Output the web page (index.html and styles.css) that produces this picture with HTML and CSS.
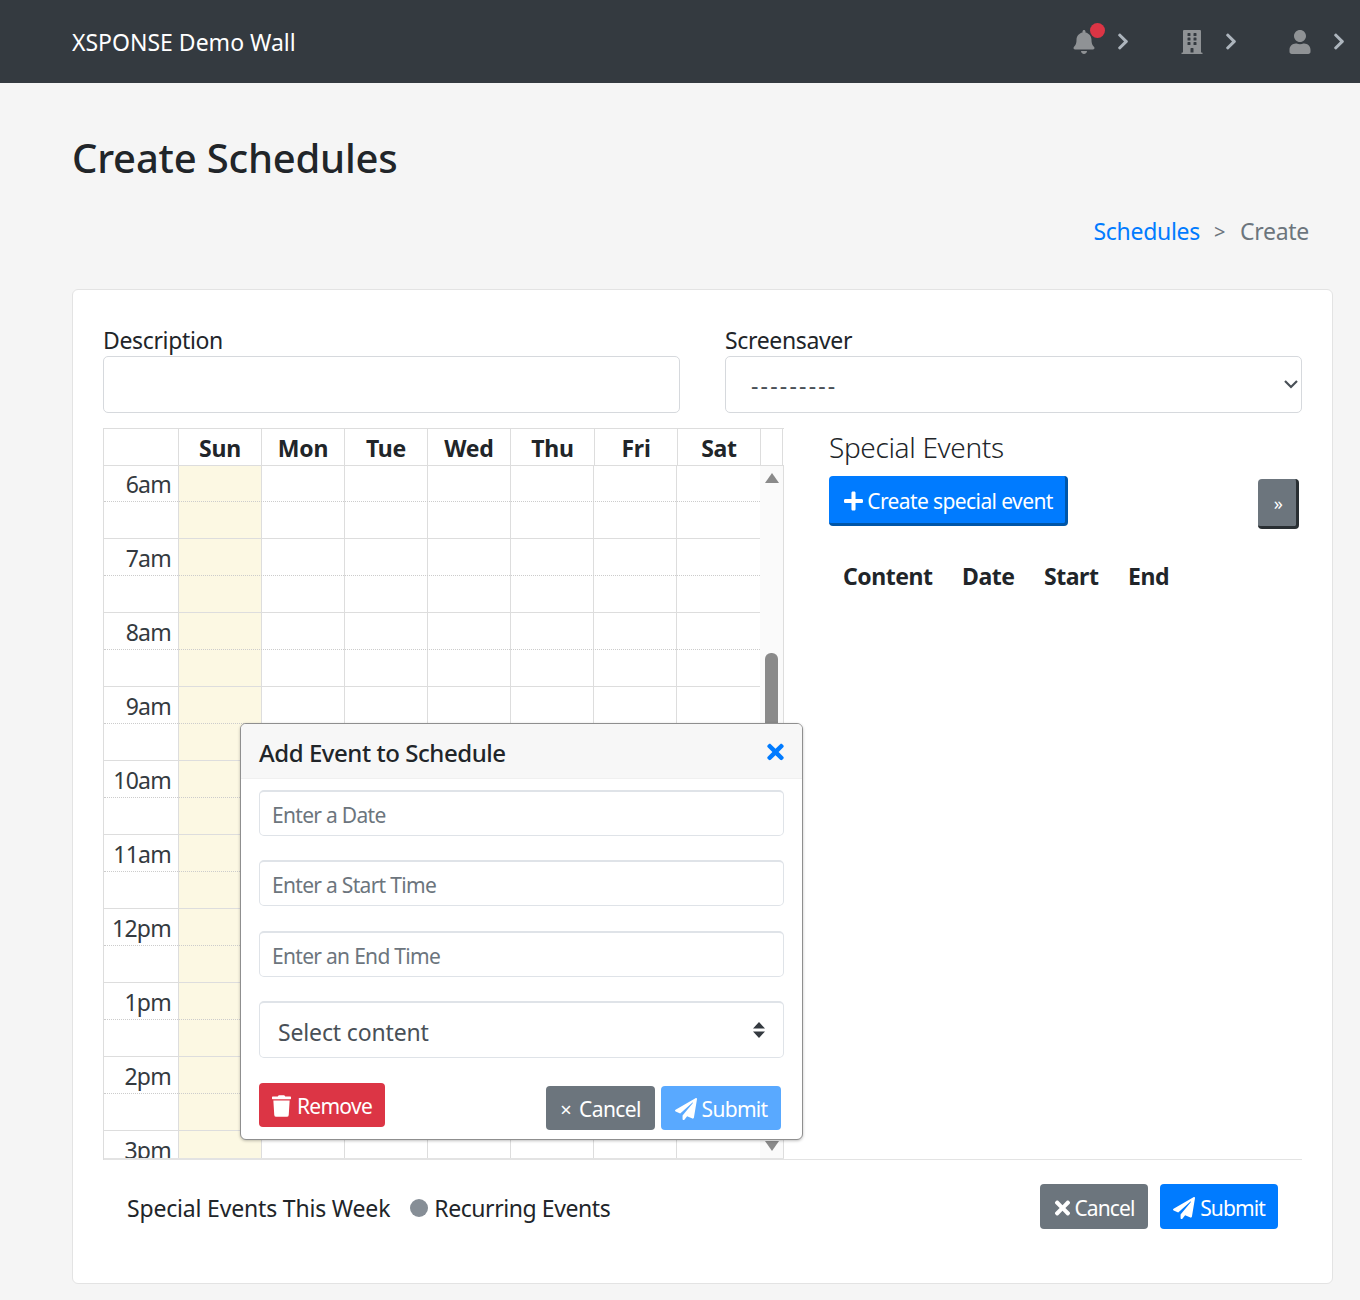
FILE: index.html
```html
<!DOCTYPE html>
<html lang="en">
<head>
<meta charset="utf-8">
<title>Create Schedules</title>
<link rel="stylesheet" href="styles.css">
</head>
<body>
<svg class="defs" width="0" height="0" aria-hidden="true">
  <symbol id="i-bell" viewBox="0 0 448 512"><path d="M224 512c35.32 0 63.97-28.65 63.97-64H160.03c0 35.35 28.65 64 63.97 64zm215.39-149.71c-19.32-20.76-55.47-51.99-55.47-154.29 0-77.7-54.48-139.9-127.94-155.16V32c0-17.67-14.32-32-31.98-32s-31.98 14.33-31.98 32v20.84C118.56 68.1 64.08 130.3 64.08 208c0 102.3-36.15 133.53-55.47 154.29-6 6.45-8.66 14.16-8.61 21.71.11 16.4 12.98 32 32.1 32h383.8c19.12 0 32-15.6 32.1-32 .05-7.55-2.61-15.27-8.61-21.71z"/></symbol>
  <symbol id="i-building" viewBox="0 0 448 512"><path d="M436 480h-20V24c0-13.255-10.745-24-24-24H56C42.745 0 32 10.745 32 24v456H12c-6.627 0-12 5.373-12 12v20h448v-20c0-6.627-5.373-12-12-12zM128 76c0-6.627 5.373-12 12-12h40c6.627 0 12 5.373 12 12v40c0 6.627-5.373 12-12 12h-40c-6.627 0-12-5.373-12-12V76zm0 96c0-6.627 5.373-12 12-12h40c6.627 0 12 5.373 12 12v40c0 6.627-5.373 12-12 12h-40c-6.627 0-12-5.373-12-12v-40zm52 148h-40c-6.627 0-12-5.373-12-12v-40c0-6.627 5.373-12 12-12h40c6.627 0 12 5.373 12 12v40c0 6.627-5.373 12-12 12zm76 160h-64v-84c0-6.627 5.373-12 12-12h40c6.627 0 12 5.373 12 12v84zm64-172c0 6.627-5.373 12-12 12h-40c-6.627 0-12-5.373-12-12v-40c0-6.627 5.373-12 12-12h40c6.627 0 12 5.373 12 12v40zm0-96c0 6.627-5.373 12-12 12h-40c-6.627 0-12-5.373-12-12v-40c0-6.627 5.373-12 12-12h40c6.627 0 12 5.373 12 12v40zm0-96c0 6.627-5.373 12-12 12h-40c-6.627 0-12-5.373-12-12V76c0-6.627 5.373-12 12-12h40c6.627 0 12 5.373 12 12v40z"/></symbol>
  <symbol id="i-user" viewBox="0 0 448 512"><path d="M224 256c70.7 0 128-57.3 128-128S294.7 0 224 0 96 57.3 96 128s57.3 128 128 128zm89.6 32h-16.7c-22.2 10.2-46.9 16-72.9 16s-50.6-5.8-72.9-16h-16.7C60.2 288 0 348.2 0 422.4V464c0 26.5 21.5 48 48 48h352c26.5 0 48-21.5 48-48v-41.6c0-74.2-60.2-134.4-134.4-134.4z"/></symbol>
  <symbol id="i-chevron" viewBox="0 0 320 512"><path d="M285.476 272.971L91.132 467.314c-9.373 9.373-24.569 9.373-33.941 0l-22.667-22.667c-9.357-9.357-9.375-24.522-.04-33.901L188.505 256 34.484 101.255c-9.335-9.379-9.317-24.544.04-33.901l22.667-22.667c9.373-9.373 24.569-9.373 33.941 0L285.475 239.03c9.373 9.372 9.373 24.568.001 33.941z"/></symbol>
  <symbol id="i-times" viewBox="0 0 352 512"><path d="M242.72 256l100.07-100.07c12.28-12.28 12.28-32.19 0-44.48l-22.24-22.24c-12.28-12.28-32.19-12.28-44.48 0L176 189.28 75.93 89.21c-12.28-12.28-32.19-12.28-44.48 0L9.21 111.45c-12.28 12.28-12.28 32.19 0 44.48L109.28 256 9.21 356.07c-12.28 12.28-12.28 32.19 0 44.48l22.24 22.24c12.28 12.28 32.2 12.28 44.48 0L176 322.72l100.07 100.07c12.28 12.28 32.2 12.28 44.48 0l22.24-22.24c12.28-12.28 12.28-32.19 0-44.48L242.72 256z"/></symbol>
  <symbol id="i-plane" viewBox="0 0 512 512"><path d="M476 3.2L12.5 270.6c-18.1 10.4-15.8 35.6 2.2 43.2L121 358.4l287.3-253.2c5.5-4.9 13.3 2.6 8.6 8.3L176 407v80.5c0 23.6 28.5 32.9 42.5 15.8L282 426l124.6 52.2c14.2 6 30.4-2.9 33-18.2l72-432C515 7.8 493.3-6.8 476 3.2z"/></symbol>
  <symbol id="i-trash" viewBox="0 0 448 512"><path d="M432 32H312l-9.4-18.7A24 24 0 0 0 281.1 0H166.8a23.72 23.72 0 0 0-21.4 13.3L136 32H16A16 16 0 0 0 0 48v32a16 16 0 0 0 16 16h416a16 16 0 0 0 16-16V48a16 16 0 0 0-16-16zM53.2 467a48 48 0 0 0 47.9 45h245.8a48 48 0 0 0 47.9-45L416 128H32z"/></symbol>
  <symbol id="i-plus" viewBox="0 0 448 512"><path d="M416 208H272V64c0-17.67-14.33-32-32-32h-32c-17.67 0-32 14.33-32 32v144H32c-17.67 0-32 14.33-32 32v32c0 17.67 14.33 32 32 32h144v144c0 17.67 14.33 32 32 32h32c17.67 0 32-14.33 32-32V304h144c17.67 0 32-14.33 32-32v-32c0-17.67-14.33-32-32-32z"/></symbol>
</svg>

<nav class="navbar">
  <a class="brand">XSPONSE Demo Wall</a>
  <div class="nav-items">
    <div class="nav-item">
      <svg class="nav-icon"><use href="#i-bell"/></svg>
      <span class="badge"></span>
      <svg class="nav-chevron"><use href="#i-chevron"/></svg>
    </div>
    <div class="nav-item">
      <svg class="nav-icon"><use href="#i-building"/></svg>
      <svg class="nav-chevron"><use href="#i-chevron"/></svg>
    </div>
    <div class="nav-item">
      <svg class="nav-icon"><use href="#i-user"/></svg>
      <svg class="nav-chevron"><use href="#i-chevron"/></svg>
    </div>
  </div>
</nav>

<main class="page">
  <h1 class="title">Create Schedules</h1>
  <div class="crumbs"><a class="crumb-link">Schedules</a><span class="crumb-sep">&gt;</span><span class="crumb-now">Create</span></div>

  <section class="card">
    <div class="fields">
      <div class="field">
        <label class="field-label">Description</label>
        <input class="field-input" type="text">
      </div>
      <div class="field">
        <label class="field-label">Screensaver</label>
        <select class="field-input field-select"><option>---------</option></select>
      </div>
    </div>

    <div class="workspace">
      <div class="calendar">
        <div class="cal-head">
          <div class="head-cell head-axis"></div>
          <div class="head-cell">Sun</div>
          <div class="head-cell">Mon</div>
          <div class="head-cell">Tue</div>
          <div class="head-cell">Wed</div>
          <div class="head-cell head-wide">Thu</div>
          <div class="head-cell">Fri</div>
          <div class="head-cell">Sat</div>
          <div class="head-cell head-gutter"></div>
        </div>
        <div class="cal-body">
          <div class="rows">
            <div class="hour"><div class="axis">6am</div><div class="day today"></div><div class="day"></div><div class="day"></div><div class="day"></div><div class="day"></div><div class="day"></div><div class="day"></div></div>
            <div class="hour"><div class="axis">7am</div><div class="day today"></div><div class="day"></div><div class="day"></div><div class="day"></div><div class="day"></div><div class="day"></div><div class="day"></div></div>
            <div class="hour"><div class="axis">8am</div><div class="day today"></div><div class="day"></div><div class="day"></div><div class="day"></div><div class="day"></div><div class="day"></div><div class="day"></div></div>
            <div class="hour"><div class="axis">9am</div><div class="day today"></div><div class="day"></div><div class="day"></div><div class="day"></div><div class="day"></div><div class="day"></div><div class="day"></div></div>
            <div class="hour"><div class="axis">10am</div><div class="day today"></div><div class="day"></div><div class="day"></div><div class="day"></div><div class="day"></div><div class="day"></div><div class="day"></div></div>
            <div class="hour"><div class="axis">11am</div><div class="day today"></div><div class="day"></div><div class="day"></div><div class="day"></div><div class="day"></div><div class="day"></div><div class="day"></div></div>
            <div class="hour"><div class="axis">12pm</div><div class="day today"></div><div class="day"></div><div class="day"></div><div class="day"></div><div class="day"></div><div class="day"></div><div class="day"></div></div>
            <div class="hour"><div class="axis">1pm</div><div class="day today"></div><div class="day"></div><div class="day"></div><div class="day"></div><div class="day"></div><div class="day"></div><div class="day"></div></div>
            <div class="hour"><div class="axis">2pm</div><div class="day today"></div><div class="day"></div><div class="day"></div><div class="day"></div><div class="day"></div><div class="day"></div><div class="day"></div></div>
            <div class="hour"><div class="axis">3pm</div><div class="day today"></div><div class="day"></div><div class="day"></div><div class="day"></div><div class="day"></div><div class="day"></div><div class="day"></div></div>
          </div>
          <div class="scrollbar">
            <span class="arrow-up"></span>
            <span class="thumb"></span>
            <span class="arrow-down"></span>
          </div>
        </div>
      </div>

      <aside class="events">
        <h2 class="events-title">Special Events</h2>
        <div class="events-actions">
          <button class="btn btn-create"><svg class="ico ico-plus"><use href="#i-plus"/></svg>Create special event</button>
          <button class="btn btn-toggle">»</button>
        </div>
        <div class="events-cols">
          <span class="col-content">Content</span>
          <span class="col-date">Date</span>
          <span class="col-start">Start</span>
          <span class="col-end">End</span>
        </div>
      </aside>
    </div>

    <div class="footer">
      <div class="legend">
        <span class="legend-special">Special Events This Week</span>
        <span class="legend-dot"></span>
        <span class="legend-rec">Recurring Events</span>
      </div>
      <div class="footer-actions">
        <button class="btn btn-gray btn-foot"><svg class="ico ico-x"><use href="#i-times"/></svg>Cancel</button>
        <button class="btn btn-blue btn-foot"><svg class="ico ico-send"><use href="#i-plane"/></svg>Submit</button>
      </div>
    </div>

    <div class="modal">
      <div class="modal-head">
        <h3 class="modal-title">Add Event to Schedule</h3>
        <svg class="modal-close"><use href="#i-times"/></svg>
      </div>
      <div class="modal-body">
        <input class="m-input" type="text" placeholder="Enter a Date">
        <input class="m-input m-second" type="text" placeholder="Enter a Start Time">
        <input class="m-input" type="text" placeholder="Enter an End Time">
        <select class="m-select"><option>Select content</option></select>
        <div class="m-actions">
          <button class="btn btn-red"><svg class="ico ico-trash"><use href="#i-trash"/></svg>Remove</button>
          <div class="m-right">
            <button class="btn btn-gray btn-m"><span class="small-x">×</span>Cancel</button>
            <button class="btn btn-faded btn-m"><svg class="ico ico-send"><use href="#i-plane"/></svg>Submit</button>
          </div>
        </div>
      </div>
    </div>
  </section>
</main>
</body>
</html>
```

FILE: styles.css
```css
* { box-sizing: border-box; }
html, body { margin: 0; padding: 0; }
body {
  background: #f5f5f5;
  color: #212529;
  font-family: "Noto Sans", "Open Sans", sans-serif;
  font-size: 23px;
  height: 1300px;
  overflow: hidden;
}
.defs { position: absolute; }

/* navbar */
.navbar {
  height: 83px;
  background: #343a40;
  display: flex;
  align-items: center;
  justify-content: space-between;
  padding: 0 15px 0 72px;
}
.brand { color: #fff; font-size: 23px; }
.nav-items { display: flex; gap: 52px; }
.nav-item { position: relative; display: flex; align-items: center; gap: 22px; }
.nav-icon { width: 22px; height: 24px; margin-top: 1px; fill: #8f9295; display: block; }
.nav-chevron { width: 12px; height: 19px; fill: #adb5bd; display: block; }
.badge {
  position: absolute;
  left: 17px;
  top: -6px;
  width: 15px;
  height: 15px;
  border-radius: 50%;
  background: #dc3545;
}

/* page header */
.page { padding: 0 27px 0 72px; }
.title {
  margin: 0;
  padding-top: 47px;
  font-size: 40px;
  line-height: 56px;
  font-weight: 500;
  letter-spacing: -0.2px;
}
.crumbs {
  display: flex;
  justify-content: flex-end;
  align-items: center;
  gap: 14px;
  height: 32px;
  margin-top: 29px;
  padding-right: 24px;
  font-size: 23px;
  letter-spacing: -0.3px;
}
.crumb-link { color: #007bff; }
.crumb-sep { color: #6c757d; font-size: 20px; margin-right: 1px; }
.crumb-now { color: #6c757d; }

/* card */
.card {
  position: relative;
  margin-top: 42px;
  height: 995px;
  background: #fff;
  border: 1px solid #e3e3e3;
  border-radius: 6px;
  padding: 35px 30px 0;
}
.fields { display: grid; grid-template-columns: 577px 577px; column-gap: 45px; }
.field-label { display: block; height: 31px; line-height: 30px; font-size: 23px; letter-spacing: -0.35px; color: #212529; }
.field-input {
  display: block;
  width: 100%;
  height: 57px;
  border: 1px solid #d6d9dd;
  border-radius: 5px;
  background: #fff;
  font: inherit;
  color: #495057;
}
.field-select {
  appearance: none;
  padding-left: 25px;
  letter-spacing: 2.2px;
  background: #fff url("data:image/svg+xml,%3Csvg xmlns='http://www.w3.org/2000/svg' width='14' height='9'%3E%3Cpath fill='none' stroke='%23495057' stroke-width='2.200' d='M1 1l6 6 6-6'/%3E%3C/svg%3E") no-repeat right 3px top 23px;
}

/* workspace */
.workspace { display: flex; margin-top: 15px; }
.calendar { width: 681px; height: 732px; border-left: 1px solid #ddd; flex: none; }
.cal-head {
  display: flex;
  height: 38px;
  border-top: 1px solid #ddd;
  border-bottom: 1px solid #ddd;
}
.head-cell {
  width: 83px;
  border-right: 1px solid #ddd;
  text-align: center;
  font-weight: 700;
  font-size: 23px;
  line-height: 38px;
  letter-spacing: -0.25px;
}
.head-axis { width: 75px; }
.head-wide { width: 84px; }
.head-gutter { width: 22px; border-right: 1px solid #ddd; }
.cal-body {
  display: flex;
  height: 693px;
  overflow: hidden;
  border-bottom: 1px solid #e3e3e3;
}
.rows { width: 656px; flex: none; }
.hour {
  position: relative;
  display: grid;
  grid-template-columns: 74px repeat(7, 83px);
  height: 74px;
  border-bottom: 1px solid #ddd;
}
.hour:first-child { height: 73px; }
.hour:first-child::after { top: 35px; }
.hour:first-child .axis { line-height: 36px; }
.hour::after {
  content: "";
  position: absolute;
  left: 0;
  right: 0;
  top: 36px;
  border-top: 1px dotted #ccc;
}
.axis {
  text-align: right;
  padding-right: 7px;
  font-size: 23px;
  line-height: 38px;
  letter-spacing: -0.75px;
  color: #343a40;
}
.day { border-left: 1px solid #ddd; }
.today { background: #fcf8e3; }
.scrollbar {
  width: 24px;
  flex: none;
  background: #fafafa;
  border-right: 1px solid #ddd;
  display: flex;
  flex-direction: column;
  align-items: center;
}
.arrow-up {
  margin-top: 7px;
  border-left: 7.500px solid transparent;
  border-right: 7.500px solid transparent;
  border-bottom: 10px solid #8a8a8a;
}
.thumb { width: 13px; height: 300px; margin-top: 170px; background: #8a8a8a; border-radius: 6px; }
.arrow-down {
  margin-top: 188px;
  border-left: 7.500px solid transparent;
  border-right: 7.500px solid transparent;
  border-top: 10px solid #8a8a8a;
}

/* events */
.events { flex: 1; margin-left: 45px; }
.events-title {
  margin: 0;
  font-size: 28px;
  font-weight: 300;
  line-height: 38px;
  letter-spacing: -0.35px;
}
.events-actions { display: flex; justify-content: space-between; align-items: flex-start; margin-top: 10px; padding-right: 3px; }
.btn {
  display: inline-flex;
  align-items: center;
  justify-content: center;
  border: 0;
  border-radius: 4px;
  color: #fff;
  font: inherit;
  font-size: 21px;
  letter-spacing: -0.6px;
  padding: 2px 0 0;
}
.btn-create {
  width: 239px;
  height: 50px;
  background: #007bff;
  border-right: 3px solid #0056a8;
  border-bottom: 3px solid #0056a8;
  padding: 3px 0 0 3px;
}
.btn-toggle {
  width: 41px;
  height: 50px;
  margin-top: 3px;
  background: #6c757d;
  border-right: 3px solid #292f33;
  border-bottom: 3px solid #292f33;
  font-size: 18px;
  padding: 1px 0 0 2px;
}
.events-cols {
  display: flex;
  margin-top: 29px;
  padding-left: 14px;
  font-weight: 700;
  font-size: 23px;
  line-height: 36px;
  letter-spacing: -0.45px;
}
.col-content { width: 119px; }
.col-date { width: 82px; }
.col-start { width: 84px; }

.ico { display: block; fill: #fff; flex: none; }
.ico-plus { width: 19px; height: 22px; margin-right: 4px; }
.ico-x { width: 17px; height: 22px; margin-right: 4px; }
.ico-send { width: 22px; height: 22px; margin-right: 5px; }
.ico-trash { width: 19px; height: 22px; margin-right: 6px; }

/* footer */
.footer {
  display: flex;
  justify-content: space-between;
  padding: 24px 24px 0;
  border-top: 1px solid #e3e3e3;
  margin-top: -1px;
}
.legend { display: flex; align-items: center; font-size: 23px; height: 48px; }
.legend-special { letter-spacing: -0.18px; }
.legend-rec { letter-spacing: -0.42px; }
.legend-dot { width: 18px; height: 18px; border-radius: 50%; background: #868e96; margin: 0 6px 0 20px; }
.footer-actions { display: flex; gap: 12px; }
.btn-foot { height: 45px; letter-spacing: -0.9px; }
.btn-gray { background: #6c757d; }
.btn-blue { background: #007bff; }
.btn-foot.btn-gray { width: 108px; }
.btn-foot.btn-blue { width: 118px; }

/* modal */
.modal {
  position: absolute;
  left: 167px;
  top: 433px;
  width: 563px;
  height: 417px;
  background: #fff;
  border: 1px solid #8f8f8f;
  border-radius: 6px;
  box-shadow: 0 1px 3px rgba(0, 0, 0, 0.25);
  overflow: hidden;
}
.modal-head {
  height: 55px;
  background: #f7f7f7;
  border-bottom: 1px solid #f0f0f0;
  display: flex;
  align-items: center;
  justify-content: space-between;
  padding: 0 18px;
}
.modal-title { margin: 0; padding-top: 2px; font-size: 24px; font-weight: 500; letter-spacing: -0.45px; }
.modal-close { width: 19px; height: 24px; margin: 1px -1px 0 0; fill: #007bff; display: block; }
.modal-body { padding: 11px 18px 0; display: flex; flex-direction: column; }
.m-input {
  height: 46px;
  margin-bottom: 24px;
  border: 1px solid #dfe3e8;
  border-top-width: 2px;
  border-radius: 5px;
  padding: 2px 12px 0;
  font: inherit;
  font-size: 21px;
  letter-spacing: -0.7px;
  color: #495057;
  background: #fff;
}
.m-second { margin-bottom: 25px; }
.m-input::placeholder { color: #6c757d; opacity: 1; }
.m-select {
  appearance: none;
  height: 57px;
  border: 1px solid #dfe3e8;
  border-top-width: 2px;
  border-radius: 5px;
  padding: 4px 18px 0;
  font: inherit;
  font-size: 23px;
  letter-spacing: -0.15px;
  color: #495057;
  background: #fff url("data:image/svg+xml,%3Csvg xmlns='http://www.w3.org/2000/svg' width='12' height='16'%3E%3Cpath fill='%23343a40' d='M6 0l6 6.500H0zM6 16L0 9.500h12z'/%3E%3C/svg%3E") no-repeat right 18px top 19px;
}
.m-actions { display: flex; justify-content: space-between; align-items: flex-start; margin-top: 25px; padding-right: 3px; }
.m-right { display: flex; gap: 6px; margin-top: 3px; }
.btn-red { width: 126px; height: 44px; background: #dc3545; letter-spacing: -0.7px; }
.btn-m { height: 44px; }
.btn-m.btn-gray { width: 109px; }
.btn-faded { width: 120px; background: #59a9ff; letter-spacing: -0.7px; }
.small-x { margin-right: 8px; font-size: 20px; }
```
